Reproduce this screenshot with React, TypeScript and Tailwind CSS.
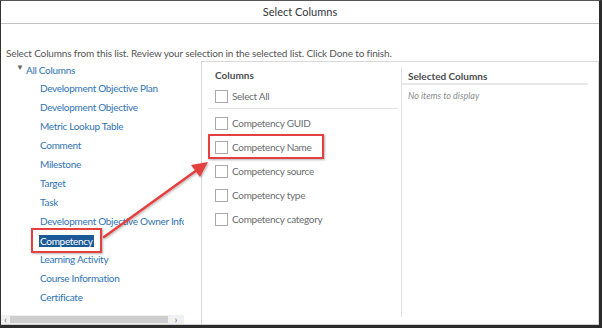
import React from "react";

const tree = [
  "Development Objective Plan",
  "Development Objective",
  "Metric Lookup Table",
  "Comment",
  "Milestone",
  "Target",
  "Task",
  "Development Objective Owner Info",
  "Competency",
  "Learning Activity",
  "Course Information",
  "Certificate",
];

const cols = [
  "Competency GUID",
  "Competency Name",
  "Competency source",
  "Competency type",
  "Competency category",
];

function Box() {
  return <span className="block w-[13px] h-[13px] border border-[#a9a9a9] bg-white shrink-0" />;
}

export default function App() {
  return (
    <div
      className="relative w-[602px] h-[328px] overflow-hidden bg-white border-t border-l border-t-[#555] border-l-[#333] border-r-[3px] border-b-[3px] border-[#2b2b2b] text-[#32363a]"
      style={{ fontFamily: "Lato, 'Liberation Sans', sans-serif" }}
    >
      <div className="flex flex-col h-full border-b border-[#d0d0d0]">
        <div className="h-[22px] flex items-center justify-center text-[11px] text-[#32363a] border-b border-[#c4c4c4] box-content">
          Select Columns
        </div>
        <div className="pt-[22px] pl-[5px] h-[37px] text-[10px] leading-[14px] tracking-[-0.15px] text-[#555]">
          Select Columns from this list. Review your selection in the selected list. Click Done to finish.
        </div>
        <div className="flex flex-1 min-h-0">
          {/* left tree */}
          <div className="w-[200px] flex flex-col">
            <div className="w-[183px] flex-1 overflow-hidden text-[10px] tracking-[-0.3px] text-[#2f74b3]">
              <div className="flex items-center h-[16px] mt-[1px] pl-[15px] whitespace-nowrap">
                <span className="text-[#666] text-[8px] leading-none -mt-[6px] w-[10px]">▼</span>
                <span>All Columns</span>
              </div>
              <div className="flex flex-col pt-[1px]">
                {tree.map((t) => (
                  <div key={t} className="h-[19px] flex items-center pl-[38px] whitespace-nowrap">
                    {t === "Competency" ? (
                      <span className="bg-[#1c5a97] text-white px-[1px] leading-[12px]">{t}</span>
                    ) : (
                      <span className="px-[1px]">{t}</span>
                    )}
                  </div>
                ))}
              </div>
            </div>
            <div className="w-[183px] h-[9px] flex items-center bg-[#f0f0f0] text-[9px] text-[#555] leading-none">
              <span className="w-[9px] text-center">‹</span>
              <span className="flex-1 h-[7px] bg-[#cdcdcd]" />
              <span className="w-[16px] text-center">›</span>
            </div>
          </div>
          {/* columns box */}
          <div className="flex-1 flex border-l border-t border-r border-[#d9d9d9]">
            <div className="w-[199px] pt-[6px] pl-[13px] pr-[3px]">
              <div className="text-[10px] font-bold text-[#4a4d50] h-[14px] leading-[14px]">Columns</div>
              <div className="flex items-center gap-[4px] h-[15px] mt-[7px] text-[10px] tracking-[-0.3px] text-[#6a6d70]">
                <Box />
                <span>Select All</span>
              </div>
              <div className="h-px bg-[#e0e0e0] -ml-[7px] mt-[4px]" />
              <div className="flex flex-col mt-[2px]">
                {cols.map((c) => (
                  <div key={c} className="flex items-center gap-[4px] h-[24px] text-[10px] tracking-[-0.3px] text-[#6a6d70]">
                    <Box />
                    <span>{c}</span>
                  </div>
                ))}
              </div>
            </div>
            <div className="flex-1 pt-[6px] pb-[7px]">
              <div className="h-full border-l border-[#e2e2e2]">
                <div className="w-[186px] border-b-2 border-[#e8e8e8] h-[17px] pl-[6px] text-[10px] font-bold text-[#4a4d50] leading-[14px] pt-[1px]">
                  Selected Columns
                </div>
                <div className="pl-[6px] pt-[4px] text-[9px] italic text-[#8a8d90]">No items to display</div>
              </div>
            </div>
          </div>
        </div>
      </div>

      {/* annotations */}
      <div className="absolute left-[30px] top-[227px] w-[71px] h-[25px] border-2 border-[#e5403f] shadow-[1px_1px_2px_rgba(0,0,0,0.3)]" />
      <div className="absolute left-[207px] top-[133px] w-[116px] h-[25px] border-2 border-[#e5403f] shadow-[1px_1px_2px_rgba(0,0,0,0.3)]" />
      <svg className="absolute left-0 top-0" width="602" height="328" viewBox="0 0 602 328">
        <defs>
          <filter id="sh" x="-20%" y="-20%" width="140%" height="140%">
            <feDropShadow dx="1" dy="1" stdDeviation="1" floodColor="#000" floodOpacity="0.3" />
          </filter>
        </defs>
        <g filter="url(#sh)">
          <line x1="103" y1="236" x2="196" y2="169" stroke="#e5403f" strokeWidth="2.5" strokeLinecap="round" />
          <polygon points="207,161 190,164 199,176" fill="#e5403f" />
        </g>
      </svg>
    </div>
  );
}
